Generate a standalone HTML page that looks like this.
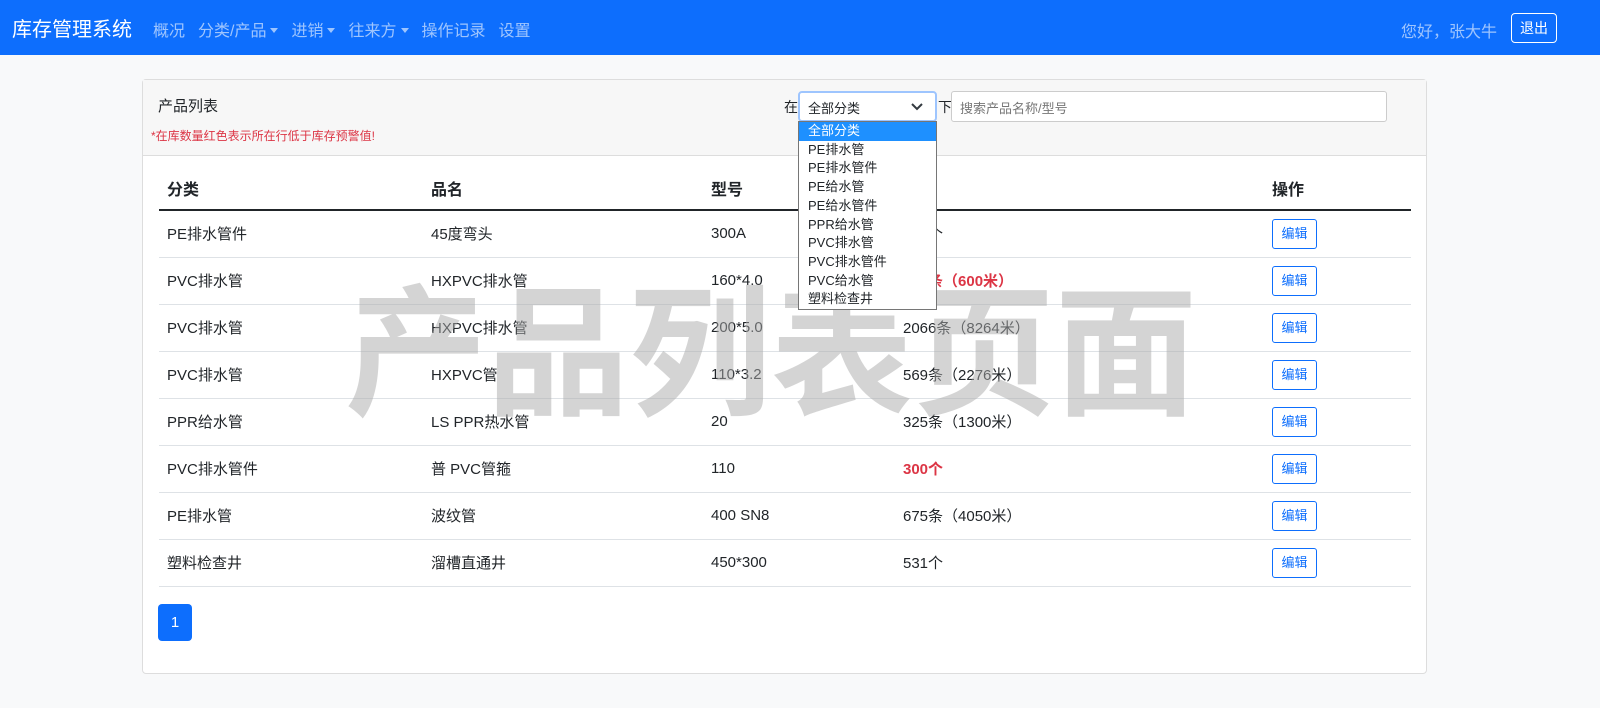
<!DOCTYPE html>
<html><head><meta charset="utf-8"><style>
*{box-sizing:border-box;margin:0;padding:0}
body{width:1600px;height:708px;background:#f8f9fa;font-family:"Liberation Sans","Noto Sans CJK SC",sans-serif;color:#212529;position:relative;overflow:hidden;font-size:16px}
.nav{height:55px;background:#0d6efd;position:relative}
.nav .brand{position:absolute;left:12px;top:13px;font-size:20px;color:#fff}
.nav .links{position:absolute;left:153px;top:17px;font-size:16px;color:rgba(255,255,255,.6)}
.nav .links span{margin-right:13px}
.caret{display:inline-block;width:0;height:0;border-left:4px solid transparent;border-right:4px solid transparent;border-top:5px solid rgba(255,255,255,.6);vertical-align:3px;margin-left:4px}
.hello{position:absolute;left:1401px;top:18px;color:rgba(255,255,255,.6);font-size:16px}
.logout{position:absolute;left:1511px;top:13px;width:46px;height:30px;border:1px solid #fff;border-radius:4px;color:#fff;font-size:14px;text-align:center;line-height:28px}
.card{position:absolute;left:142px;top:79px;width:1285px;height:595px;border:1px solid #ddd;border-radius:4px;background:#fff}
.ch{height:76px;background:#f7f7f7;border-bottom:1px solid #ddd;position:relative}
.ch .t{position:absolute;left:15px;top:15px;font-size:15px}
.ch .w{position:absolute;left:8px;top:47px;font-size:12px;color:#dc3545}
.ch .in{position:absolute;left:641px;top:17px;font-size:14px}
.ch .xia{position:absolute;left:795px;top:17px;font-size:14px}
.search{position:absolute;left:808px;top:11px;width:436px;height:31px;border:1px solid #ccc;border-radius:3px;background:#fff;font-size:13px;color:#777;padding:6px 8px}
table{position:absolute;left:16px;top:86px;width:1252px;border-collapse:collapse}
th{text-align:left;font-size:16px;font-weight:bold;height:44px;border-bottom:2px solid #212529;padding-left:8px}
td{height:47px;border-bottom:1px solid #dee2e6;padding-left:8px;font-size:15px}
.red{color:#dc3545;font-weight:bold}
.btn{display:inline-block;width:45px;height:30px;border:1px solid #0d6efd;border-radius:3px;color:#0d6efd;font-size:13px;text-align:center;line-height:28px}
.page{position:absolute;left:15px;top:524px;width:34px;height:37px;background:#0d6efd;color:#fff;border-radius:4px;text-align:center;line-height:37px;font-size:15px}
.wm{position:absolute;left:345px;top:278px;font-size:142px;font-weight:bold;color:rgba(170,170,170,.5);white-space:nowrap;line-height:1.1}
.sel{position:absolute;left:798px;top:91px;width:139px;height:31px;border:2px solid #9ec5fe;border-radius:4px;background:#fff;font-size:13px;padding:5px 8px}
.sel svg{position:absolute;right:12px;top:10px}
.list{position:absolute;left:798px;top:121px;width:139px;height:189px;border:1px solid #767676;background:#fff;font-size:13px;line-height:18.7px}
.list div{padding-left:9px}
.list .on{background:#1e90ff;color:#fff}
</style></head><body>
<div class="nav"><div class="brand">库存管理系统</div>
<div class="links"><span>概况</span><span>分类/产品<i class="caret"></i></span><span>进销<i class="caret"></i></span><span>往来方<i class="caret"></i></span><span>操作记录</span><span>设置</span></div>
<div class="hello">您好，张大牛</div><div class="logout">退出</div></div>
<div class="card">
<div class="ch"><div class="t">产品列表</div><div class="w">*在库数量红色表示所在行低于库存预警值!</div><div class="in">在</div><div class="xia">下</div><div class="search">搜索产品名称/型号</div></div>
<table>
<tr><th style="width:264px">分类</th><th style="width:280px">品名</th><th style="width:192px">型号</th><th style="width:369px">数量</th><th>操作</th></tr>
<tr><td>PE排水管件</td><td>45度弯头</td><td>300A</td><td>400个</td><td><span class="btn">编辑</span></td></tr>
<tr><td>PVC排水管</td><td>HXPVC排水管</td><td>160*4.0</td><td class="red">150条（600米）</td><td><span class="btn">编辑</span></td></tr>
<tr><td>PVC排水管</td><td>HXPVC排水管</td><td>200*5.0</td><td>2066条（8264米）</td><td><span class="btn">编辑</span></td></tr>
<tr><td>PVC排水管</td><td>HXPVC管</td><td>110*3.2</td><td>569条（2276米）</td><td><span class="btn">编辑</span></td></tr>
<tr><td>PPR给水管</td><td>LS PPR热水管</td><td>20</td><td>325条（1300米）</td><td><span class="btn">编辑</span></td></tr>
<tr><td>PVC排水管件</td><td>普 PVC管箍</td><td>110</td><td class="red">300个</td><td><span class="btn">编辑</span></td></tr>
<tr><td>PE排水管</td><td>波纹管</td><td>400 SN8</td><td>675条（4050米）</td><td><span class="btn">编辑</span></td></tr>
<tr><td>塑料检查井</td><td>溜槽直通井</td><td>450*300</td><td>531个</td><td><span class="btn">编辑</span></td></tr>
</table>
<div class="page">1</div>
</div>
<div class="wm">产品列表页面</div>
<div class="sel">全部分类<svg width="12" height="8" viewBox="0 0 12 8"><path d="M1 1l5 5 5-5" fill="none" stroke="#343a40" stroke-width="2"/></svg></div>
<div class="list"><div class="on">全部分类</div><div>PE排水管</div><div>PE排水管件</div><div>PE给水管</div><div>PE给水管件</div><div>PPR给水管</div><div>PVC排水管</div><div>PVC排水管件</div><div>PVC给水管</div><div>塑料检查井</div></div>
</body></html>
